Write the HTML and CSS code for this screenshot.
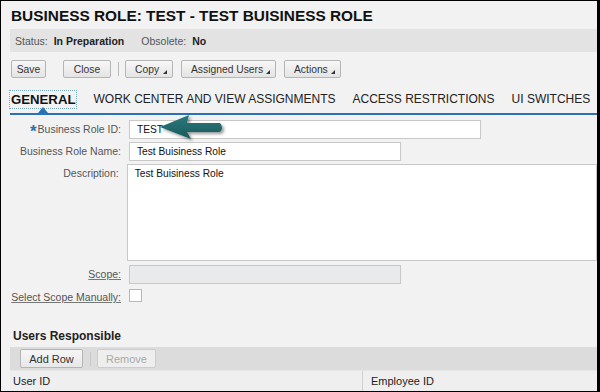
FILE: index.html
```html
<!DOCTYPE html>
<html>
<head>
<meta charset="utf-8">
<link rel="stylesheet" href="styles.css">
</head>
<body>
<div class="frame">
  <h1 class="title">BUSINESS ROLE: TEST - TEST BUISINESS ROLE</h1>
  <div class="status">
    <span class="slabel">Status:</span><span class="sval">In Preparation</span>
    <span class="slabel gap">Obsolete:</span><span class="sval">No</span>
  </div>
  <div class="toolbar">
    <button class="btn w-save">Save</button>
    <button class="btn w-close">Close</button>
    <span class="sep"></span>
    <button class="btn menu w-copy">Copy</button>
    <button class="btn menu w-assigned">Assigned Users</button>
    <button class="btn menu w-actions">Actions</button>
  </div>
  <div class="tabs">
    <span class="tab active">GENERAL</span>
    <span class="tab">WORK CENTER AND VIEW ASSIGNMENTS</span>
    <span class="tab">ACCESS RESTRICTIONS</span>
    <span class="tab">UI SWITCHES</span>
    <span class="pointer"></span>
  </div>
  <div class="form">
    <div class="row">
      <label class="lbl"><span class="star">*</span>Business Role ID:</label>
      <div class="input w-id">TEST</div>
    </div>
    <div class="row">
      <label class="lbl">Business Role Name:</label>
      <div class="input w-name">Test Buisiness Role</div>
    </div>
    <div class="row r-desc">
      <label class="lbl">Description:</label>
      <div class="input textarea">Test Buisiness Role</div>
    </div>
    <div class="row r-scope">
      <label class="lbl u">Scope:</label>
      <div class="input w-name disabled"></div>
    </div>
    <div class="row">
      <label class="lbl u">Select Scope Manually:</label>
      <div class="check"></div>
    </div>
  </div>
  <h2 class="section">Users Responsible</h2>
  <div class="tbar">
    <button class="btn small w-add">Add Row</button>
    <span class="sep light"></span>
    <button class="btn small dis w-remove">Remove</button>
  </div>
  <div class="thead">
    <div class="th c1">User ID</div>
    <div class="th c2">Employee ID</div>
  </div>
  <svg class="arrow" width="80" height="34" viewBox="0 0 80 34">
    <defs>
      <filter id="sh" x="-20%" y="-40%" width="150%" height="200%">
        <feDropShadow dx="2" dy="2" stdDeviation="1.5" flood-color="#000" flood-opacity="0.4"/>
      </filter>
      <linearGradient id="g" x1="0" y1="0" x2="0" y2="1">
        <stop offset="0" stop-color="#2a7a7c"/>
        <stop offset="1" stop-color="#185a5c"/>
      </linearGradient>
    </defs>
    <path d="M4 15 L33 3 L31 11 L64 11 Q68 15.5 64 20 L31 20 L35 27 Z" fill="url(#g)" filter="url(#sh)"/>
  </svg>
</div>
</body>
</html>
```
FILE: styles.css
```css
* { box-sizing: border-box; }
html, body { margin: 0; padding: 0; }
body {
  width: 600px; height: 392px; overflow: hidden;
  font-family: "Liberation Sans", Arial, sans-serif;
  background: #000;
}
.frame {
  position: relative;
  margin: 1px 3px 1px 1px;
  height: 390px;
  background: #f2f2f2;
  overflow: hidden;
  padding-left: 9px;
}
.title {
  margin: 0;
  padding: 6px 0 0 1px;
  height: 28px;
  font-size: 15.4px;
  font-weight: bold;
  color: #111;
}
.status {
  height: 23px;
  background: #e3e3e3;
  display: flex; align-items: center;
  padding-left: 5px;
  font-size: 10.5px;
}
.slabel { color: #555; margin-right: 6px; }
.slabel.gap { margin-left: 17px; }
.sval { font-weight: bold; color: #222; }
.toolbar {
  display: flex; align-items: flex-start;
  padding: 8px 0 0 1px;
  height: 33px;
}
.btn {
  font-family: inherit;
  font-size: 10.3px;
  color: #333;
  height: 18px;
  padding: 0;
  border: 1px solid #b5b5b5;
  border-radius: 2px;
  background: linear-gradient(#f7f7f7, #e4e4e4);
  margin-right: 8px;
  position: relative;
  text-align: center;
}
.btn.menu { text-align: left; padding-left: 9px; }
.btn.menu::after {
  content: ""; position: absolute; right: 5px; bottom: 3px;
  border-left: 4px solid transparent; border-bottom: 4px solid #333;
}
.w-save { width: 35px; margin-right: 17px; }
.w-close { width: 48px; margin-right: 7px; }
.w-copy { width: 48px; }
.w-assigned { width: 95px; }
.w-actions { width: 57px; }
.sep { width: 1px; height: 14px; background: #bbb; margin: 2px 6px 0 0; }
.tabs {
  position: relative;
  display: flex; align-items: center;
  height: 30px;
  border-bottom: 2px solid #2a72b5;
  margin-right: -3px;
}
.tab { font-size: 12px; color: #222; margin-right: 17px; white-space: nowrap; }
.tab.active {
  font-weight: bold; color: #111;
  outline: 1px dotted #7ab;
  outline-offset: 1px;
  padding: 0; margin-left: 1px; margin-right: 18px;
  font-size: 13.2px;
}
.pointer {
  position: absolute; left: 28px; bottom: 0;
  border-left: 5px solid transparent; border-right: 5px solid transparent;
  border-bottom: 6px solid #2a72b5;
}
.form { padding-top: 5px; height: 190px; }
.row { display: flex; align-items: flex-start; margin-bottom: 3px; }
.r-desc, .r-scope { margin-bottom: 4px; }
.lbl {
  width: 111px; text-align: right; font-size: 10.5px; color: #555;
  padding-top: 3px; margin-right: 8px; white-space: nowrap;
}
.lbl.u { text-decoration: underline; text-decoration-color: #777; }
.star { color: #2a72b5; font-size: 17px; font-weight: bold; line-height: 10px; margin-right: 1px; vertical-align: -4px; }
.input {
  height: 19px; background: #fff; border: 1px solid #c8c8c8;
  font-size: 10.2px; color: #111; padding: 3px 0 0 7px;
}
.w-id { width: 352px; }
.w-name { width: 272px; }
.textarea { width: 480px; height: 97px; padding-top: 3px; }
.disabled { background: #e8eaec; }
.check { width: 13px; height: 13px; background: #fff; border: 1px solid #b8b8b8; margin-top: 1px; }
.section {
  margin: 0; padding: 24px 0 0 3px; height: 42px;
  font-size: 12px; font-weight: bold; color: #222;
}
.tbar {
  height: 23px; background: #dcdcdc;
  display: flex; align-items: center;
  padding-left: 10px; margin-right: -3px;
}
.btn.small { height: 19px; font-size: 11px; background: linear-gradient(#f6f6f6, #e8e8e8); margin-right: 7px; }
.w-add { width: 63px; }
.w-remove { width: 59px; margin-left: 6px; }
.btn.dis { color: #aaa; border-color: #ccc; background: #eee; }
.sep.light { background: #c8c8c8; margin: 0; }
.thead {
  display: flex; height: 21px; background: #efefef;
  border-top: 1px solid #e6e6e6; margin-right: -3px;
}
.th { font-size: 11px; color: #222; padding: 4px 0 0 3px; }
.c1 { width: 353px; border-right: 1px solid #d0d0d0; }
.c2 { padding-left: 8px; }
.arrow { position: absolute; left: 155px; top: 111px; }
```
